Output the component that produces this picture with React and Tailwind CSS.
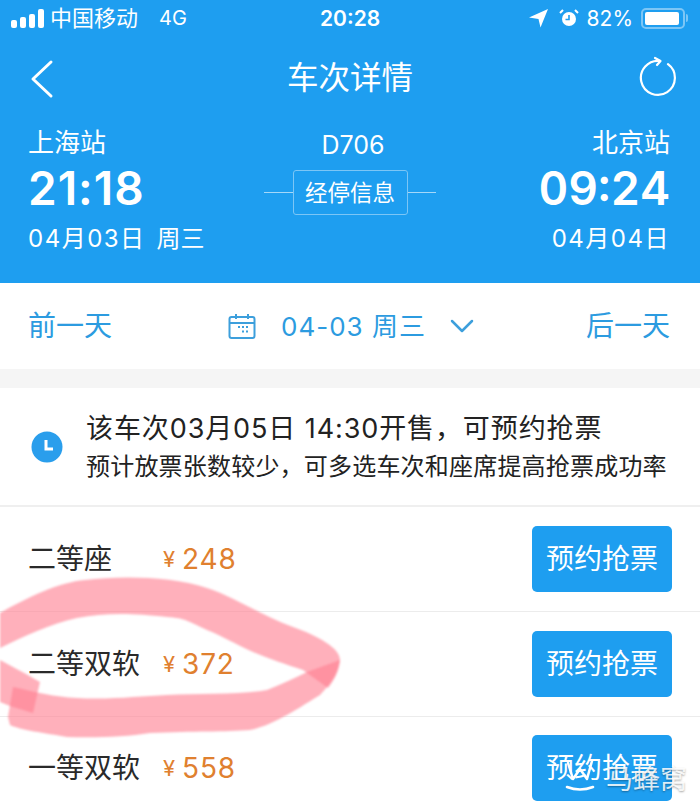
const font = { fontFamily: 'Inter, "Noto Sans CJK SC", sans-serif' };

function Signal() {
  return (
    <div className="flex items-end gap-[3px]">
      <div className="w-[6px] h-[8px] rounded-[2px] bg-white" />
      <div className="w-[6px] h-[11px] rounded-[2px] bg-white" />
      <div className="w-[6px] h-[14px] rounded-[2px] bg-white" />
      <div className="w-[6px] h-[19px] rounded-[2px] bg-white" />
    </div>
  );
}

function StatusBar() {
  return (
    <div className="relative h-[36px] flex items-center justify-between pl-[11px] pr-[12px] text-white">
      <div className="flex items-center">
        <Signal />
        <span className="ml-[6px] text-[22px] leading-none">中国移动</span>
        <span className="ml-[21px] text-[20px] leading-none">4G</span>
      </div>
      <span className="absolute left-[320px] top-[8px] text-[21px] leading-none font-semibold">20:28</span>
      <div className="flex items-center">
        <svg width="20" height="20" viewBox="0 0 20 20">
          <path d="M0 9.500 19 1 11.500 19.500 9.500 11Z" fill="#fff" />
        </svg>
        <svg className="ml-[10px]" width="20" height="20" viewBox="0 0 20 20">
          <circle cx="10" cy="11" r="7" fill="#fff" />
          <path d="M10 7v4.500H6.500" stroke="#1e9ef0" strokeWidth="1.600" fill="none" />
          <path d="M1 5 4 2M19 5l-3-3" stroke="#fff" strokeWidth="2" />
        </svg>
        <span className="ml-[8px] text-[21px] leading-none">82%</span>
        <div className="ml-[8px] w-[44px] h-[21px] rounded-[5px] border-2 border-[#7cc6f6] p-[2px]">
          <div className="w-[34px] h-full rounded-[2px] bg-white" />
        </div>
        <div className="ml-[1px] w-[2px] h-[8px] rounded-r bg-[#7cc6f6]" />
      </div>
    </div>
  );
}

function Header() {
  return (
    <div className="h-[283px] bg-[#1e9ef0] text-white">
      <StatusBar />
      <div className="relative h-[84px] flex items-center justify-center">
        <svg className="absolute left-[28px] top-[22px]" width="28" height="42" viewBox="0 0 28 42" fill="none" stroke="#fff" strokeWidth="3" strokeLinecap="round" strokeLinejoin="round">
          <path d="M23 4 5 21 23 38" />
        </svg>
        <span className="text-[31.500px] leading-none">车次详情</span>
        <svg className="absolute left-[639px] top-[20px]" width="40" height="42" viewBox="0 0 40 42" fill="none" stroke="#fff" strokeWidth="2.200" strokeLinecap="round" strokeLinejoin="round">
          <path d="M21 5A17 17 0 1 0 29 8.200" />
          <path d="M16 2 21.500 5 18 9" />
        </svg>
      </div>
      <div className="grid grid-cols-[1fr_172px_1fr] px-[30px] pt-[4px]">
        <div className="-ml-[2px]">
          <div className="text-[26px] leading-[38px]">上海站</div>
          <div className="text-[46px] leading-[52px] font-semibold tracking-[1px]">21:18</div>
          <div className="mt-[10px] text-[24px] leading-[30px] whitespace-nowrap">
            <span className="tracking-[1.500px]">04月03日</span>
            <span className="ml-[11px]">周三</span>
          </div>
        </div>
        <div className="flex flex-col items-center">
          <div className="mt-[2px] ml-[6px] text-[25px] leading-[38px]">D706</div>
          <div className="mt-[6px] flex items-center w-full">
            <div className="flex-1 h-[1px] bg-[#a5d8f9]" />
            <div className="w-[115px] h-[45px] flex items-center justify-center rounded-[3px] border border-[#7cc6f6] text-[22.500px]">
              经停信息
            </div>
            <div className="flex-1 h-[1px] bg-[#a5d8f9]" />
          </div>
        </div>
        <div className="text-right">
          <div className="text-[26px] leading-[38px]">北京站</div>
          <div className="text-[46px] leading-[52px] font-semibold tabular-nums">09:24</div>
          <div className="mt-[10px] text-[24px] leading-[30px] tracking-[1.500px]">04月04日</div>
        </div>
      </div>
    </div>
  );
}

function DateBar() {
  return (
    <div className="h-[86px] bg-white flex items-center justify-between pl-[28px] pr-[30px] text-[#2c9be0]">
      <span className="text-[28px]">前一天</span>
      <div className="flex items-center ml-[4px]">
        <svg width="28" height="26" viewBox="0 0 28 26" fill="none" stroke="#3d9fdc" strokeWidth="2">
          <rect x="1.500" y="4" width="25" height="21" rx="2" />
          <path d="M1.500 10h25M8 1v5M20 1v5" />
          <path d="M10 14h2M14 14h2M18 14h2M14 18.500h2M18 18.500h2" />
        </svg>
        <span className="ml-[25px] text-[26px] tracking-[1px]">04-03 周三</span>
        <svg className="ml-[24px]" width="24" height="14" viewBox="0 0 24 14" fill="none" stroke="#3d9fdc" strokeWidth="2.500" strokeLinecap="round" strokeLinejoin="round">
          <path d="M2 2 12 12 22 2" />
        </svg>
      </div>
      <span className="text-[28px]">后一天</span>
    </div>
  );
}

function Notice() {
  return (
    <div className="h-[119px] bg-white flex items-center pl-[31px] border-b-2 border-[#efefef]">
      <svg width="32" height="32" viewBox="0 0 32 32">
        <circle cx="16" cy="16" r="15.500" fill="#2a9eec" />
        <path d="M15 9v9h7" stroke="#fff" strokeWidth="3" fill="none" />
      </svg>
      <div className="ml-[23px] text-[#222]">
        <div className="text-[27px] leading-[40px] tracking-[0.900px]">该车次03月05日 14:30开售，可预约抢票</div>
        <div className="text-[24px] leading-[36px] tracking-[0.200px]">预计放票张数较少，可多选车次和座席提高抢票成功率</div>
      </div>
    </div>
  );
}

function SeatRow({ name, price, last }) {
  return (
    <div className={`flex items-center justify-between px-[28px] ${last ? 'h-[102px]' : 'h-[105px] border-b border-[#ececec]'}`}>
      <div className="flex items-center">
        <span className="w-[135px] text-[28px] text-[#2a2a2a]">{name}</span>
        <span className="text-[#e0802f] text-[22px]">¥</span>
        <span className="ml-[7px] text-[#e0802f] text-[28px] tracking-[0.800px]">{price}</span>
      </div>
      <button className="w-[140px] h-[66px] rounded-[5px] bg-[#1e9ef0] text-white text-[28px]">预约抢票</button>
    </div>
  );
}

function Scribble() {
  return (
    <svg className="absolute left-0 top-0 pointer-events-none blur-[1px]" width="700" height="810" viewBox="0 0 700 810">
      <g fill="#ff7f92" fillOpacity="0.62">
        <path d="M0 613C28 597 60 582 85 580 C120 576 170 576 207 588 C235 597 262 616 293 627 C318 636 340 648 340 660 C339 672 334 680 328 688 L303 670 C285 664 270 659 253 652 C235 644 222 636 207 630 C190 622 185 618 167 617 C130 613 105 613 77 618 C50 624 25 636 0 648Z" />
        <path d="M340 660C338 672 334 680 320 695 C305 704 295 711 283 717 C270 724 260 728 250 730 C225 732 195 731 150 733 C125 737 95 738 67 737 C45 733 20 730 10 725 L8 717 L13 687 C35 692 55 697 77 698 C110 700 140 696 167 695 C200 693 240 695 267 690 C282 684 295 678 307 672Z" />
        <path d="M0 660C15 668 30 676 40 682 L33 713 L10 706 L0 702Z" />
      </g>
    </svg>
  );
}

function Watermark() {
  return (
    <div className="absolute left-[564px] top-[757px] flex items-start text-white/85 text-[27px] leading-[30px] [text-shadow:0_1px_2px_rgba(0,0,0,0.35)]">
      <svg width="32" height="36" viewBox="0 0 32 36" fill="none" stroke="#fff" strokeWidth="2.500" strokeLinecap="round" strokeLinejoin="round">
        <path d="M4 6 9 22 16 12 23 22 28 4" />
        <path d="M3 30C11 33 21 33 29 30" />
      </svg>
      <span className="ml-[10px] mt-[8px] whitespace-nowrap">马蜂窝</span>
    </div>
  );
}

export default function App() {
  return (
    <div className="relative w-[700px] h-[810px] overflow-hidden bg-white" style={font}>
      <Header />
      <DateBar />
      <div className="h-[19px] bg-[#f5f5f5]" />
      <Notice />
      <SeatRow name="二等座" price="248" />
      <SeatRow name="二等双软" price="372" />
      <SeatRow name="一等双软" price="558" last />
      <Scribble />
      <Watermark />
    </div>
  );
}
